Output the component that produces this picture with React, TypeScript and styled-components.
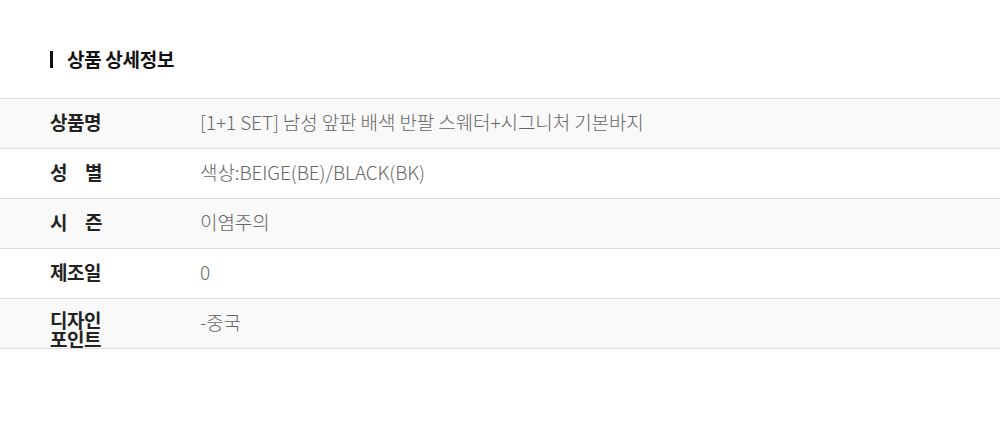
import React from "react";
import styled, { createGlobalStyle } from "styled-components";

const GlobalStyle = createGlobalStyle`
  html, body {
    margin: 0;
    padding: 0;
    background: #fff;
    font-family: "Noto Sans CJK KR", "Noto Sans", sans-serif;
  }
`;

const Wrapper = styled.div`
  width: 1000px;
  height: 421px;
  padding-top: 48px;
  box-sizing: border-box;
`;

const Title = styled.h2`
  display: flex;
  align-items: center;
  gap: 14px;
  margin: 0 0 28px 50px;
  font-size: 19px;
  font-weight: 700;
  color: #111;
  line-height: 22px;
  letter-spacing: -0.3px;

  &::before {
    content: "";
    width: 3px;
    height: 17px;
    background: #111;
  }
`;

const Table = styled.div`
  border-top: 1px solid #ddd;
`;

const Row = styled.div<{ $shade: boolean }>`
  display: flex;
  align-items: center;
  height: 45px;
  padding-bottom: 4px;
  border-bottom: 1px solid #ddd;
  background: ${(p) => (p.$shade ? "#f9f9f9" : "#fff")};
`;

const Label = styled.div<{ $wrap?: boolean }>`
  width: 52px;
  margin-left: 50px;
  margin-top: ${(p) => (p.$wrap ? "14px" : "0")};
  font-size: 19px;
  font-weight: 700;
  color: #222;
  line-height: 19px;
  letter-spacing: -0.5px;
  text-align: justify;
  text-align-last: justify;
  word-break: keep-all;
`;

const Value = styled.div`
  margin-left: 98px;
  font-size: 19px;
  font-weight: 300;
  color: #666;
  letter-spacing: -0.1px;
`;

const rows = [
  { label: "상품명", value: "[1+1 SET] 남성 앞판 배색 반팔 스웨터+시그니처 기본바지" },
  { label: "성 별", value: "색상:BEIGE(BE)/BLACK(BK)" },
  { label: "시 즌", value: "이염주의" },
  { label: "제조일", value: "0" },
  { label: "디자인 포인트", value: "-중국", wrap: true },
];

const App: React.FC = () => {
  return (
    <Wrapper>
      <GlobalStyle />
      <Title>상품 상세정보</Title>
      <Table>
        {rows.map((row, index) => (
          <Row key={index} $shade={index % 2 === 0}>
            <Label $wrap={row.wrap}>{row.label}</Label>
            <Value>{row.value}</Value>
          </Row>
        ))}
      </Table>
    </Wrapper>
  );
};

export default App;
